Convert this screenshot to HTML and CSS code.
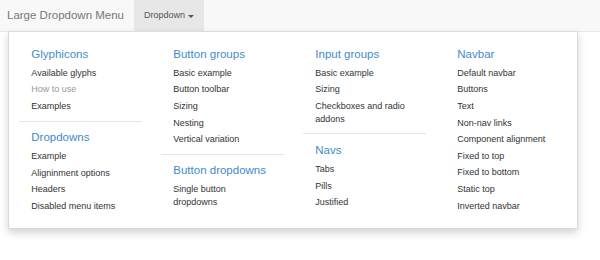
FILE: index.html
```html
<!DOCTYPE html>
<html>
<head>
<meta charset="utf-8">
<link rel="stylesheet" href="styles.css">
</head>
<body>
<nav class="navbar">
  <a class="brand">Large Dropdown Menu</a>
  <div class="nav-item open">
    <a class="toggle">Dropdown <span class="caret"></span></a>
    <ul class="mega-menu">
      <li class="col">
        <ul>
          <li class="header">Glyphicons</li>
          <li><a>Available glyphs</a></li>
          <li class="disabled"><a>How to use</a></li>
          <li><a>Examples</a></li>
          <li class="divider"></li>
          <li class="header">Dropdowns</li>
          <li><a>Example</a></li>
          <li><a>Aligninment options</a></li>
          <li><a>Headers</a></li>
          <li><a>Disabled menu items</a></li>
        </ul>
      </li>
      <li class="col">
        <ul>
          <li class="header">Button groups</li>
          <li><a>Basic example</a></li>
          <li><a>Button toolbar</a></li>
          <li><a>Sizing</a></li>
          <li><a>Nesting</a></li>
          <li><a>Vertical variation</a></li>
          <li class="divider"></li>
          <li class="header">Button dropdowns</li>
          <li><a>Single button dropdowns</a></li>
        </ul>
      </li>
      <li class="col">
        <ul>
          <li class="header">Input groups</li>
          <li><a>Basic example</a></li>
          <li><a>Sizing</a></li>
          <li><a>Checkboxes and radio addons</a></li>
          <li class="divider"></li>
          <li class="header">Navs</li>
          <li><a>Tabs</a></li>
          <li><a>Pills</a></li>
          <li><a>Justified</a></li>
        </ul>
      </li>
      <li class="col">
        <ul>
          <li class="header">Navbar</li>
          <li><a>Default navbar</a></li>
          <li><a>Buttons</a></li>
          <li><a>Text</a></li>
          <li><a>Non-nav links</a></li>
          <li><a>Component alignment</a></li>
          <li><a>Fixed to top</a></li>
          <li><a>Fixed to bottom</a></li>
          <li><a>Static top</a></li>
          <li><a>Inverted navbar</a></li>
        </ul>
      </li>
    </ul>
  </div>
</nav>
</body>
</html>
```
FILE: styles.css
```css
* { box-sizing: border-box; }
html, body { margin: 0; padding: 0; background: #fff; }
body {
  font-family: "Liberation Sans", Arial, Helvetica, sans-serif;
  font-size: 9px;
  line-height: 12.8px;
  color: #333;
}
ul { list-style: none; margin: 0; padding: 0; }
a { text-decoration: none; color: inherit; cursor: pointer; }

.navbar {
  display: flex;
  align-items: stretch;
  height: 32px;
  background: #f8f8f8;
  border-bottom: 1px solid #e7e7e7;
  padding-left: 7px;
}
.brand {
  font-size: 11.5px;
  line-height: 31px;
  color: #777;
  padding-right: 10px;
}
.nav-item { position: static; display: flex; }
.toggle {
  display: flex;
  align-items: center;
  gap: 3px;
  padding: 0 10px;
  height: 31px;
  background: #e7e7e7;
  color: #555;
  font-size: 9px;
}
.caret {
  width: 0; height: 0;
  border-top: 3px solid #555;
  border-left: 3px solid transparent;
  border-right: 3px solid transparent;
  margin-top: 1px;
}

.mega-menu {
  position: absolute;
  top: 31px;
  left: 8px;
  width: 570px;
  background: #fff;
  border: 1px solid rgba(0,0,0,.15);
  border-top-color: #ddd;
  box-shadow: 0 4px 8px rgba(0,0,0,.175);
  border-radius: 0 0 2px 2px;
  padding: 12px 0 13px;
  display: grid;
  grid-template-columns: repeat(4, 1fr);
}
.col { padding: 0 9.5px; }
.col li > a {
  display: block;
  padding: 1.9px 12.8px;
  line-height: 12.8px;
  color: #333;
}
.col li.disabled > a { color: #999; }
.header {
  padding: 2px 12.8px 3px;
  font-size: 11.5px;
  line-height: 16px;
  color: #428bca;
}
.divider {
  height: 1px;
  margin: 5.8px 0;
  background: #e5e5e5;
}
```
